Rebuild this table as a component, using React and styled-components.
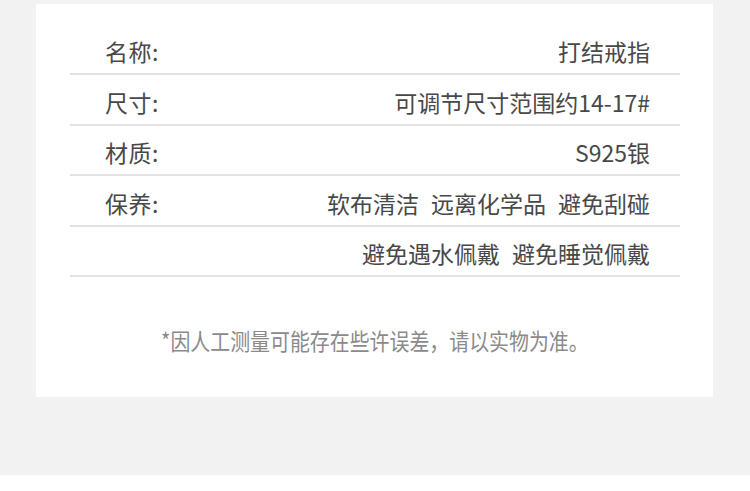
import React from 'react'
import styled, { createGlobalStyle } from 'styled-components'

const GlobalStyle = createGlobalStyle`
  body {
    margin: 0;
    background: #ffffff;
    font-family: "Noto Sans CJK SC", "Noto Sans", sans-serif;
  }
`

const Page = styled.div`
  background: #f2f2f2;
  height: 475px;
  padding-top: 4px;
  box-sizing: border-box;
`

const Card = styled.div`
  margin-left: 36px;
  width: 677px;
  height: 393px;
  box-sizing: border-box;
  background: #ffffff;
  padding: 20.5px 33px 0 34px;
`

const Row = styled.div`
  display: flex;
  justify-content: space-between;
  align-items: flex-end;
  height: 50.5px;
  box-sizing: border-box;
  padding: 0 30px 10px 35px;
  border-bottom: 2px solid #e3e3e3;
  font-size: 23px;
  line-height: 23px;
  color: #484848;
`

const Label = styled.span`
  white-space: nowrap;
  letter-spacing: 0.5px;
`

const Value = styled.span`
  display: flex;
  gap: 12px;
  white-space: nowrap;
`

const Note = styled.div`
  margin-top: 52px;
  text-align: center;
  font-size: 23px;
  line-height: 23px;
  color: #8a8a8a;

  span {
    display: inline-block;
    transform: scaleX(0.866);
  }
`

const specs = [
  { label: '名称:', value: ['打结戒指'] },
  { label: '尺寸:', value: ['可调节尺寸范围约14-17#'] },
  { label: '材质:', value: ['S925银'] },
  { label: '保养:', value: ['软布清洁', '远离化学品', '避免刮碰'] },
  { label: '', value: ['避免遇水佩戴', '避免睡觉佩戴'] },
]

export default function App() {
  return (
    <>
      <GlobalStyle />
      <Page>
        <Card>
          {specs.map((s, i) => (
            <Row key={i}>
              <Label>{s.label}</Label>
              <Value>
                {s.value.map((v) => (
                  <span key={v}>{v}</span>
                ))}
              </Value>
            </Row>
          ))}
          <Note>
            <span>*因人工测量可能存在些许误差，请以实物为准。</span>
          </Note>
        </Card>
      </Page>
    </>
  )
}
